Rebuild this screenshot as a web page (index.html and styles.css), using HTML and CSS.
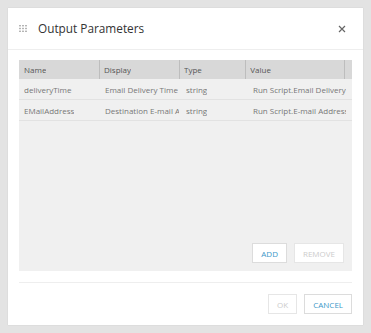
FILE: index.html
```html
<!DOCTYPE html>
<html lang="en">

<head>
    <meta charset="UTF-8">
    <meta name="viewport" content="width=device-width, initial-scale=1.0">
    <title>Output Parameters</title>
    <link rel="stylesheet" href="styles.css">
</head>

<body>
    <div class="dialog">
        <div class="dialog-header">
            <svg class="grip" width="8" height="7" viewBox="0 0 8 7">
                <rect x="0" y="0" width="2" height="1.4" />
                <rect x="3" y="0" width="2" height="1.4" />
                <rect x="6" y="0" width="2" height="1.4" />
                <rect x="0" y="2.8" width="2" height="1.4" />
                <rect x="3" y="2.8" width="2" height="1.4" />
                <rect x="6" y="2.8" width="2" height="1.4" />
                <rect x="0" y="5.6" width="2" height="1.4" />
                <rect x="3" y="5.6" width="2" height="1.4" />
                <rect x="6" y="5.6" width="2" height="1.4" />
            </svg>
            <span class="dialog-title">Output Parameters</span>
            <svg class="close" width="8" height="8" viewBox="0 0 8 8">
                <path d="M1 1 L7 7 M7 1 L1 7" />
            </svg>
        </div>

        <div class="dialog-body">
            <div class="grid">
                <div class="grid-row grid-head">
                    <div class="cell c-name"><span>Name</span></div>
                    <div class="cell c-display"><span>Display</span></div>
                    <div class="cell c-type"><span>Type</span></div>
                    <div class="cell c-value"><span>Value</span></div>
                    <div class="cell c-fill"></div>
                </div>
                <div class="grid-row">
                    <div class="cell c-name"><span>deliveryTime</span></div>
                    <div class="cell c-display"><span>Email Delivery Time</span></div>
                    <div class="cell c-type"><span>string</span></div>
                    <div class="cell c-value"><span>Run Script.Email Delivery Time</span></div>
                </div>
                <div class="grid-row">
                    <div class="cell c-name"><span>EMailAddress</span></div>
                    <div class="cell c-display"><span>Destination E-mail Address</span></div>
                    <div class="cell c-type"><span>string</span></div>
                    <div class="cell c-value"><span>Run Script.E-mail Address</span></div>
                </div>
                <div class="grid-space"></div>
                <div class="grid-actions">
                    <button class="btn">ADD</button>
                    <button class="btn" disabled>REMOVE</button>
                </div>
            </div>

            <div class="dialog-footer">
                <button class="btn" disabled>OK</button>
                <button class="btn">CANCEL</button>
            </div>
        </div>
    </div>
</body>

</html>
```

FILE: styles.css
```css
* {
    box-sizing: border-box;
}

body,
html {
    margin: 0;
    height: 100%;
    overflow: hidden;
    background-color: #e3e3e3;
    font-family: "Open Sans", "Liberation Sans", sans-serif;
}

.dialog {
    margin: 8px 0 0 8px;
    width: 355px;
    height: 317px;
    background: #fff;
    display: flex;
    flex-direction: column;
    box-shadow: 0 0 1px rgba(0, 0, 0, 0.15);
}

.dialog-header {
    height: 42px;
    border-bottom: 1px solid #eeeeee;
    display: flex;
    align-items: center;
    padding: 0 17px 0 11px;
    flex-shrink: 0;
}

.grip {
    fill: #b5b5b5;
    margin-right: 11px;
}

.dialog-title {
    flex: 1;
    font-size: 11.8px;
    color: #333;
    line-height: 1;
    padding-top: 1px;
}

.close {
    stroke: #666;
    stroke-width: 1.2;
}

.dialog-body {
    flex: 1;
    padding: 10px 11px 11px;
    display: flex;
    flex-direction: column;
}

.grid {
    flex: 1;
    background: #f0f0f0;
    display: flex;
    flex-direction: column;
}

.grid-row {
    display: flex;
    height: 21px;
    align-items: stretch;
    border-bottom: 1px solid #e2e2e2;
    font-size: 8px;
    color: #777;
}

.grid-head {
    height: 19px;
    background: #d8d8d8;
    color: #555;
    border-bottom: none;
}

.cell {
    display: flex;
    align-items: center;
    padding: 0 3px 0 4px;
    min-width: 0;
}

.cell span {
    display: block;
    white-space: nowrap;
    overflow: hidden;
    min-width: 0;
}

.grid-head .cell {
    border-right: 1px solid #bdbdbd;
}

.grid-head .c-fill {
    border-right: none;
}

.c-name {
    width: 82px;
    padding-left: 5px;
}

.c-display {
    width: 81px;
}

.c-type {
    width: 67px;
}

.c-value {
    width: 100px;
}

.c-fill {
    flex: 1;
}

.grid-space {
    flex: 1;
}

.grid-actions {
    display: flex;
    justify-content: flex-end;
    gap: 7px;
    padding: 0 8px 8px 0;
}

.btn {
    height: 20px;
    padding: 0 8px;
    border: 1px solid #dcdcdc;
    background: #fff;
    font-family: inherit;
    font-size: 8px;
    color: #3d97c8;
}

.btn:disabled {
    color: #cccccc;
    border-color: #e6e6e6;
}

.dialog-footer {
    margin-top: 11px;
    padding-top: 11px;
    border-top: 1px solid #eeeeee;
    display: flex;
    justify-content: flex-end;
    gap: 7px;
}
```
